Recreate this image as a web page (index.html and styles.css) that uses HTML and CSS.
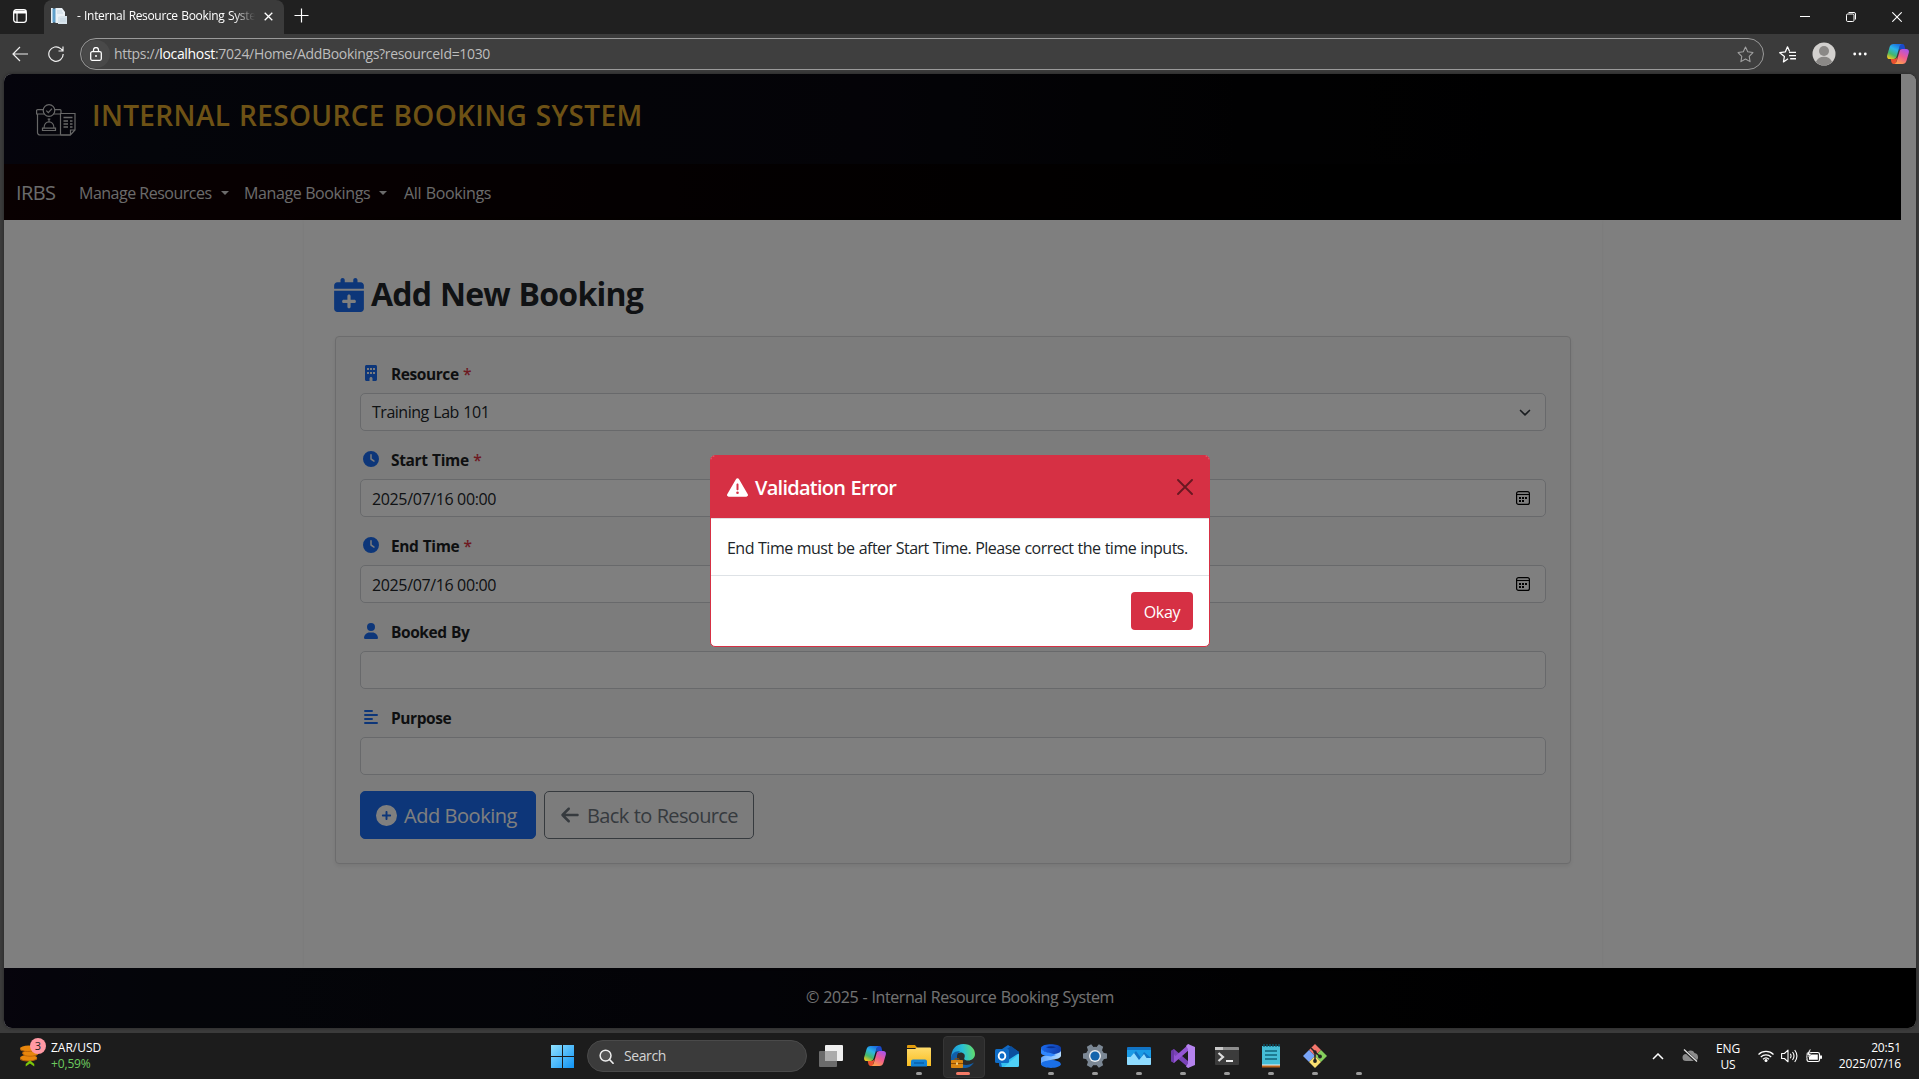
FILE: index.html
```html
<!DOCTYPE html>
<html lang="en">
<head>
<meta charset="utf-8">
<title>- Internal Resource Booking System</title>
<link rel="stylesheet" href="styles.css">
</head>
<body>
<svg width="0" height="0" class="defs" aria-hidden="true">
  <defs>
    <linearGradient id="cpA" x1="0.7" y1="0" x2="0.2" y2="1"><stop offset="0" stop-color="#1b6fe0"/><stop offset=".35" stop-color="#2bb4e8"/><stop offset=".7" stop-color="#45b86b"/><stop offset="1" stop-color="#f2c81e"/></linearGradient>
    <linearGradient id="cpB" x1="0.8" y1="0" x2="0.3" y2="1"><stop offset="0" stop-color="#a854ee"/><stop offset=".5" stop-color="#ee5a90"/><stop offset="1" stop-color="#ffa04d"/></linearGradient>
    <linearGradient id="win" x1="0" y1="0" x2="1" y2="1"><stop offset="0" stop-color="#8fe1ff"/><stop offset="1" stop-color="#0f93f5"/></linearGradient>
    <linearGradient id="edge" x1="0" y1="0.6" x2="1" y2="0.5"><stop offset="0" stop-color="#1b8fd8"/><stop offset=".5" stop-color="#28bfd6"/><stop offset="1" stop-color="#62dd6a"/></linearGradient>
    <linearGradient id="fold" x1="0" y1="0" x2="0" y2="1"><stop offset="0" stop-color="#ffdc6b"/><stop offset="1" stop-color="#f9bd22"/></linearGradient>
    <linearGradient id="blu" x1="0" y1="0" x2="1" y2="0.2"><stop offset="0" stop-color="#1a6bf0"/><stop offset="1" stop-color="#0f3fae"/></linearGradient>
    <linearGradient id="blv" x1="0" y1="0" x2="1" y2="0"><stop offset="0" stop-color="#5fa5ff"/><stop offset="1" stop-color="#b5dcff"/></linearGradient>
    <symbol id="copilot" viewBox="0 0 22 20">
      <path d="M13 0h2.500c1.200 0 1.700.8 2 1.800L18.300 5h-3.800c-1.800 0-2.600.8-3.100 2.400z" fill="#1a49c8"/>
      <path d="M6.500 0h8.300c-1.500.5-2 1.600-2.400 3L9.600 12.600c-.5 1.700-1.300 2.400-3 2.400H2.800C.6 15-.3 13.500.2 11.300L2.600 3C3.200 1 4.500 0 6.500 0z" fill="url(#cpA)"/>
      <path d="M9 20H6.500c-1.200 0-1.800-.8-2.100-1.900L3.700 15h3.700c1.800 0 2.700-.9 3.200-2.400z" fill="#e8502f"/>
      <path d="M15.500 20H7.400c1.500-.5 2-1.600 2.400-3l2.700-9.600C13 5.700 13.800 5 15.500 5h3.700c2.200 0 3.100 1.500 2.600 3.700L19.400 17c-.6 2-1.900 3-3.900 3z" fill="url(#cpB)"/>
    </symbol>
    <symbol id="clock" viewBox="0 0 512 512"><path fill="currentColor" d="M256 0a256 256 0 1 1 0 512A256 256 0 1 1 256 0zM232 120V256c0 8 4 15.500 10.700 20l96 64c11 7.400 25.900 4.400 33.300-6.700s4.400-25.900-6.700-33.300L280 243.200V120c0-13.300-10.700-24-24-24s-24 10.700-24 24z"/></symbol>
    <symbol id="picker" viewBox="0 0 14 14"><rect x=".6" y=".6" width="12.800" height="12.800" rx="2" fill="none" stroke="#000" stroke-width="1.200"/><path d="M1 3.500h12" stroke="#000" stroke-width="1.100"/><path d="M3 6h2v2H3zM6 6h2v2H6zM9 6h2v2H9zM3 9h2v2H3zM6 9h2v2H6z"/></symbol>
  </defs>
</svg>

<div class="browser">
  <div class="tabstrip">
    <svg class="ic-spaces" viewBox="0 0 14 14"><rect x=".7" y=".7" width="12.600" height="12.600" rx="2.500" fill="none" stroke="#fff" stroke-width="1.300"/><path d="M1 1.500h12v3H1z" fill="#fff"/><path d="M4 4v9" stroke="#fff" stroke-width="1.200"/></svg>
    <div class="tab">
      <svg class="favicon" viewBox="0 0 16 16"><path d="M0 0h2v15H0z" fill="#e8eef2"/><path d="M1.500 .5H5v14H1.500z" fill="#5f9fca"/><path d="M4.500 0H11l3 4v11H4.500z" fill="#eaf1f6"/><path d="M7 9l3-1h6v8H7z" fill="#d8e4ec"/><path d="M6 3h5M6 5h6M9 11h6M9 13h6" stroke="#c3d4e0"/></svg>
      <span class="tab-title">- Internal Resource Booking System</span>
      <svg class="tab-close" viewBox="0 0 9 9"><path d="M.7.700l7.600 7.600M8.300.7L.7 8.300" stroke="#fff" stroke-width="1.300"/></svg>
    </div>
    <svg class="tab-new" viewBox="0 0 15 15"><path d="M7.500.5v14M.5 7.500h14" stroke="#fff" stroke-width="1.200"/></svg>
    <div class="winctl">
      <svg viewBox="0 0 10 10"><path d="M0 4.500h10" stroke="#fff"/></svg>
      <svg viewBox="0 0 10 10"><rect x=".5" y="2" width="7.500" height="7.500" rx="1.200" fill="none" stroke="#fff"/><path d="M2.500.5H8A1.500 1.500 0 0 1 9.500 2v5.500" fill="none" stroke="#fff"/></svg>
      <svg viewBox="0 0 10 10"><path d="M.3.300l9.400 9.400M9.700.3L.3 9.700" stroke="#fff" stroke-width="1.100"/></svg>
    </div>
  </div>

  <div class="toolbar">
    <svg class="ic-back" viewBox="0 0 16 16"><path d="M8 1L1 8l7 7M1 8h15" fill="none" stroke="#eee" stroke-width="1.200"/></svg>
    <svg class="ic-reload" viewBox="0 0 16 16"><path d="M15.200 8A7.200 7.200 0 1 1 12.700 2.600L15 4.800M15 .5v4.500h-4.500" fill="none" stroke="#eee" stroke-width="1.200"/></svg>
    <div class="omnibox">
      <span class="lock"><svg viewBox="0 0 12 14"><rect x=".7" y="4.700" width="10.600" height="8.600" rx="1.500" fill="none" stroke="#fff" stroke-width="1.300"/><path d="M3.500 4.500V3a2.500 2.500 0 0 1 5 0v1.500" fill="none" stroke="#fff" stroke-width="1.300"/><circle cx="6" cy="9" r="1" fill="#fff"/></svg></span>
      <span class="url">https://<b>localhost</b>:7024/Home/AddBookings?resourceId=1030</span>
      <svg class="ic-star" viewBox="0 0 16 16"><path d="M8 1l2.100 4.500 4.900.7-3.500 3.500.8 5L8 12.300 3.700 14.700l.8-5L1 6.200l4.900-.7z" fill="none" stroke="#a2a2a2" stroke-linejoin="round"/></svg>
    </div>
    <svg class="ic-fav" viewBox="0 0 16 16"><path d="M8.500 12L4.200 15l.9-5.200L.7 6.300l5.200-.7L8 .8l2 4.300" fill="none" stroke="#fff" stroke-width="1.200" stroke-linejoin="round"/><path d="M9.500 6H16M9.500 9H16M10.500 12H16" stroke="#fff" stroke-width="1.200"/></svg>
    <svg class="ic-avatar" viewBox="0 0 24 24"><circle cx="12" cy="12" r="11.500" fill="#d2d0ce"/><circle cx="12" cy="9" r="5" fill="#8a8886"/><path d="M3.800 20a9 9 0 0 1 16.400 0 11.500 11.500 0 0 1-16.400 0z" fill="#8a8886"/></svg>
    <svg class="ic-more" viewBox="0 0 14 4"><circle cx="1.700" cy="2" r="1.400" fill="#fff"/><circle cx="7" cy="2" r="1.400" fill="#fff"/><circle cx="12.300" cy="2" r="1.400" fill="#fff"/></svg>
    <svg class="ic-copilot"><use href="#copilot"/></svg>
  </div>

  <div class="page">
    <header class="banner">
      <svg class="logo" viewBox="0 0 40 32" fill="none" stroke="#cfcfcf" stroke-width="1.200">
        <path d="M7.500 5.600H1.600a1 1 0 0 0-1 1V10h7.600M18.500 5.600H24a1 1 0 0 1 1 1V9.500M17.500 10H24M1.500 10v18.500a2.500 2.500 0 0 0 2.500 2.500H34.500"/>
        <circle cx="13" cy="6.500" r="5.800"/><path d="M10.300 6.600l2 2 3.700-4"/>
        <path d="M6.500 26.500h13v-2.300h-13zM8 24.200c0-8.500 10-8.500 10 0M13 17.800V15.500M11.700 15.200h2.600"/>
        <path d="M24.500 30.800V9.500H39V26l-4.500 5H24.500M39 26h-4.500v5"/>
        <path d="M27.500 13.500h9M27.500 17h4.500M34 17h2.500M27.500 20h4.500M34 20h2.500M27.500 23h4.500M34 23h2.500" stroke-width="1.400"/>
      </svg>
      <span class="site-title">INTERNAL RESOURCE BOOKING SYSTEM</span>
    </header>
    <nav class="navbar">
      <span class="brand">IRBS</span>
      <span class="nav-link res">Manage Resources<i class="caret"></i></span>
      <span class="nav-link book">Manage Bookings<i class="caret"></i></span>
      <span class="nav-link all">All Bookings</span>
    </nav>

    <main class="container">
      <h1>
        <svg viewBox="0 0 448 512"><path fill="currentColor" d="M96 32V64H48C21.500 64 0 85.500 0 112v48H448V112c0-26.500-21.500-48-48-48H352V32c0-17.700-14.300-32-32-32s-32 14.300-32 32V64H160V32c0-17.700-14.300-32-32-32S96 14.300 96 32zM448 192H0V464c0 26.500 21.500 48 48 48H400c26.500 0 48-21.500 48-48V192zM224 248c13.300 0 24 10.700 24 24v56h56c13.300 0 24 10.700 24 24s-10.700 24-24 24H248v56c0 13.300-10.700 24-24 24s-24-10.700-24-24V376H144c-13.300 0-24-10.700-24-24s10.700-24 24-24h56V272c0-13.300 10.700-24 24-24z"/></svg>
        <span>Add New Booking</span>
      </h1>
      <form class="card">
        <div class="label"><svg viewBox="0 0 384 512"><path fill="currentColor" fill-rule="evenodd" d="M48 0C21.500 0 0 21.500 0 48V464c0 26.500 21.500 48 48 48h96V432c0-26.500 21.500-48 48-48s48 21.500 48 48v80h96c26.500 0 48-21.500 48-48V48c0-26.500-21.500-48-48-48H48zM64 96h64v64H64zM160 96h64v64h-64zM256 96h64v64h-64zM64 224h64v64H64zM160 224h64v64h-64zM256 224h64v64h-64z"/></svg><span>Resource <em>*</em></span></div>
        <div class="field"><span>Training Lab 101</span><svg class="chev" viewBox="0 0 16 16"><path d="M2.500 5.500l5.500 5.500 5.500-5.500" fill="none" stroke="#343a40" stroke-width="2" stroke-linecap="round" stroke-linejoin="round"/></svg></div>
        <div class="label"><svg><use href="#clock"/></svg><span class="start-label">Start Time <em>*</em></span></div>
        <div class="field"><span class="date">2025/07/16 00:00</span><svg class="cal"><use href="#picker"/></svg></div>
        <div class="label"><svg><use href="#clock"/></svg><span>End Time <em>*</em></span></div>
        <div class="field"><span class="date">2025/07/16 00:00</span><svg class="cal"><use href="#picker"/></svg></div>
        <div class="label"><svg viewBox="0 0 448 512"><path fill="currentColor" d="M224 256A128 128 0 1 0 224 0a128 128 0 1 0 0 256zm-45.700 48C79.800 304 0 383.800 0 482.300C0 498.700 13.300 512 29.700 512H418.300c16.400 0 29.700-13.300 29.700-29.700C448 383.800 368.200 304 269.700 304H178.300z"/></svg><span>Booked By</span></div>
        <div class="field"></div>
        <div class="label"><svg viewBox="0 0 448 512"><path d="M32 64h224M32 192h384M32 320h224M32 448h384" stroke="currentColor" stroke-width="62" stroke-linecap="round"/></svg><span>Purpose</span></div>
        <div class="field"></div>
        <div class="actions">
          <span class="btn add"><svg viewBox="0 0 512 512"><path fill="currentColor" d="M256 512A256 256 0 1 0 256 0a256 256 0 1 0 0 512zM232 344V280H168c-13.300 0-24-10.700-24-24s10.700-24 24-24h64V168c0-13.300 10.700-24 24-24s24 10.700 24 24v64h64c13.300 0 24 10.700 24 24s-10.700 24-24 24H280v64c0 13.300-10.700 24-24 24s-24-10.700-24-24z"/></svg><span>Add Booking</span></span>
          <span class="btn back"><svg viewBox="0 0 448 512"><path fill="currentColor" d="M9.400 233.400c-12.500 12.500-12.500 32.800 0 45.300l160 160c12.500 12.500 32.800 12.500 45.300 0s12.500-32.800 0-45.300L109.200 288H416c17.700 0 32-14.300 32-32s-14.300-32-32-32H109.300L214.600 118.600c12.500-12.500 12.500-32.800 0-45.300s-32.800-12.500-45.300 0l-160 160z"/></svg><span>Back to Resource</span></span>
        </div>
      </form>
    </main>
    <footer class="footer"><span>© 2025 - Internal Resource Booking System</span></footer>

    <div class="backdrop"></div>
    <div class="modal">
      <div class="modal-head">
        <svg class="warn" viewBox="0 0 512 512"><path fill="#fff" d="M256 32c14.200 0 27.300 7.500 34.500 19.800l216 368c7.300 12.400 7.300 27.700.2 40.100S486.300 480 472 480H40c-14.300 0-27.600-7.700-34.700-20.100s-7-27.800.2-40.100l216-368C228.700 39.500 241.800 32 256 32zm0 128c-13.300 0-24 10.700-24 24V296c0 13.300 10.700 24 24 24s24-10.700 24-24V184c0-13.300-10.700-24-24-24zm32 224a32 32 0 1 0-64 0 32 32 0 1 0 64 0z"/></svg>
        <span class="modal-title">Validation Error</span>
        <svg class="x" viewBox="0 0 16 16"><path d="M1 1l14 14M15 1L1 15" stroke="#000" stroke-width="1.900" stroke-linecap="round"/></svg>
      </div>
      <div class="modal-body"><span>End Time must be after Start Time. Please correct the time inputs.</span></div>
      <div class="modal-foot"><span class="okay">Okay</span></div>
    </div>
  </div>
</div>

<div class="taskbar">
  <div class="widget">
    <div class="coins">
      <svg viewBox="0 0 20 24"><g fill="#e8860c"><ellipse cx="9" cy="4" rx="9" ry="3"/><ellipse cx="11" cy="9" rx="8.500" ry="3"/><ellipse cx="9" cy="14" rx="9" ry="3.200"/></g><path d="M0 3v2c2 3 14 3 18 0M3 8v2c2 3 13 3 16 0M0 13v2c2 3 14 3 18 0" fill="none" stroke="#b9630a" stroke-width="1"/><path d="M6 23v-2.500l4.500-4 4.500 4V23l-4.500-3z" fill="#7cc70a"/></svg>
      <span class="badge">3</span>
    </div>
    <div class="rates"><span>ZAR/USD</span><span class="up">+0,59%</span></div>
  </div>
  <div class="apps">
    <svg class="start" viewBox="0 0 23 23"><path d="M0 0h11v11H0zM12 0h11v11H12zM0 12h11v11H0zM12 12h11v11H12z" fill="url(#win)"/></svg>
    <div class="search"><svg viewBox="0 0 16 16"><circle cx="7" cy="7" r="5.800" fill="#555" stroke="#eee" stroke-width="1.600"/><path d="M11.200 11.200l3.800 4" stroke="#eee" stroke-width="1.800" stroke-linecap="round"/></svg><span>Search</span></div>
    <div class="app"><svg viewBox="0 0 24 24"><rect x="6" y="1" width="18" height="16" rx="1" fill="#efefef"/><rect x="0" y="7" width="18" height="16" rx="1" fill="#6b6b6b"/><path d="M6 7h12v10H6z" fill="#ababab"/></svg></div>
    <div class="app"><svg class="cp"><use href="#copilot"/></svg></div>
    <div class="app run"><svg viewBox="0 0 24 24"><path d="M0 2a1 1 0 0 1 1-1h7l2.500 3H0z" fill="#e09b0c"/><path d="M0 5h8l2-1.500h13a1 1 0 0 1 1 1V22H0z" fill="url(#fold)"/><path d="M4 22.500v-5a2 2 0 0 1 2-2h12a2 2 0 0 1 2 2v5z" fill="#1382d4"/><path d="M7 19h10" stroke="#0a5ea8" stroke-width="1.500"/></svg></div>
    <div class="app run active"><svg viewBox="0 0 24 24"><path d="M0 15C0 5 5 0 12.500 0 20 0 24 5 24 10c0 4-3 6.500-7 6.500-3 0-4.500-1-3.500-3 1-2.500-.5-5-4-5-4 0-7 3-6.500 8z" fill="url(#edge)"/><path d="M0 15c0-5 4-8.500 9-7.500-3 1.500-4 5.500-2 9 3 5 10 6 16 2-3 5-8 6-11.500 5.500C4 23.500 0 20 0 15z" fill="#125ea8"/><rect x="0" y="16" width="12" height="8" rx=".8" fill="#d98511"/><path d="M0 19h12v1H0z" fill="#8e4e05"/><path d="M5.200 18.500h1.600v2.300H5.200z" fill="#ffe9a0"/><path d="M4 16v-1.200h4V16" fill="none" stroke="#8e4e05"/></svg></div>
    <div class="app"><svg viewBox="0 0 24 24"><path d="M4 7l9-6 11 7v13a2 2 0 0 1-2 2H6a2 2 0 0 1-2-2z" fill="#1168c4"/><path d="M4 10h20v11a2 2 0 0 1-2 2H7z" fill="#32c1f2"/><path d="M24 9L10 18h-2V8l8-6 8 6z" fill="#0b4f9e"/><path d="M24 10L9 23h13a2 2 0 0 0 2-2z" fill="#4fd0f7"/><rect x="0" y="5" width="14" height="14" rx="1.500" fill="#0f6cc6"/><ellipse cx="7" cy="12" rx="3.300" ry="3.700" fill="none" stroke="#fff" stroke-width="1.900"/></svg></div>
    <div class="app run"><svg viewBox="0 0 24 24"><path d="M2 13.500C3 17 22 14 22 20.500 20 25 4 25 2 20.500z" fill="#1a6fe8"/><path d="M2 3.500C4-1 20-1 22 3.500v5C20 12 2 9 2 3.500z" fill="url(#blu)"/><path d="M22 6.500v5.500C21 17 2 15 2 20.500V14.500C3 9 21 12 22 6.500z" fill="url(#blv)"/><path d="M2 3.500C3 9 12 8 17 11l-5 1.500C8 12 2 11.500 2 9z" fill="#2f86ff"/><path d="M7 3.200q5-2 10 0-5 2-10 0z" fill="#0a2f8c"/></svg></div>
    <div class="app run"><svg viewBox="0 0 24 24"><g fill="#7b8794"><circle cx="12" cy="12" r="9.200"/><path d="M9.500 0h5l1 5h-7zM9.500 24h5l1-5h-7z" transform="rotate(30 12 12)"/><path d="M9.500 0h5l1 5h-7zM9.500 24h5l1-5h-7z" transform="rotate(90 12 12)"/><path d="M9.500 0h5l1 5h-7zM9.500 24h5l1-5h-7z" transform="rotate(150 12 12)"/></g><circle cx="12" cy="12" r="6" fill="#e9edf1"/><circle cx="12" cy="12" r="4.600" fill="#1464ac"/></svg></div>
    <div class="app run"><svg viewBox="0 0 24 24"><rect y="3" width="24" height="18" rx="1" fill="#1173c4"/><path d="M0 6h24v8L17 8l-3 6-5-7-5 6H0z" fill="#1a9be6"/><path d="M0 13h3.500L7 9l5 7 5-6 2.500 4H24v6a1 1 0 0 1-1 1H1a1 1 0 0 1-1-1z" fill="#8fdcff"/></svg></div>
    <div class="app run"><svg viewBox="0 0 24 24"><path d="M0 7l3-2 15 13v6L0 9z" fill="#7a43b8"/><path d="M0 7v10l3 2L18 6V0L4.500 12z" fill="#9455d4"/><path d="M0 7l3-2v14l-3-2z" fill="#6b3aa6"/><path d="M17 0l7 3v18l-7 3-2-1.500 2-3V5l-2-3z" fill="#b583ee"/></svg></div>
    <div class="app run"><svg viewBox="0 0 24 24"><rect y="3" width="24" height="18" rx="1" fill="#3c3c3c"/><path d="M0 4a1 1 0 0 1 1-1h22a1 1 0 0 1 1 1v2H0z" fill="#8c8c8c"/><path d="M0 3h8v3H0z" fill="#c8c8c8"/><path d="M3.500 9l4.500 4-4.500 4" fill="none" stroke="#ddd" stroke-width="2.200"/><path d="M11 17h7" stroke="#fff" stroke-width="1.800"/></svg></div>
    <div class="app run"><svg viewBox="0 0 24 24"><path d="M3 2h18v19H3z" fill="#45bdd6"/><path d="M3 21h18v2.500H3z" fill="#b8631b"/><path d="M3 20.500h18v1H3z" fill="#f1f1f1"/><path d="M5 0v3M8 0v3M11 0v3M14 0v3M17 0v3M20 0v3" stroke="#0d5c73" stroke-width="1.300"/><path d="M6 7h12M6 11h12M6 15h12" stroke="#12647b" stroke-width="1.600"/></svg></div>
    <div class="app run"><svg viewBox="0 0 24 24"><path d="M12 0l6 6-6 6-6-6z" fill="#f4766c"/><path d="M6 6l6 6-6 6-6-6z" fill="#79a5f8"/><path d="M18 6l6 6-6 6-6-6z" fill="#84cf5c"/><path d="M12 12l6 6-6 6-6-6z" fill="#fbe071"/><path d="M8 4l4 4v9M12 8l5 4.500" fill="none" stroke="#222" stroke-width="1.500"/><circle cx="12" cy="8" r="1.700" fill="#222"/><circle cx="12" cy="17" r="1.900" fill="#222"/><circle cx="17" cy="12.500" r="1.900" fill="#222"/></svg></div>
    <div class="app run"></div>
  </div>
  <div class="tray">
    <svg class="t-up" viewBox="0 0 12 7"><path d="M1 6l5-5 5 5" fill="none" stroke="#fff" stroke-width="1.500"/></svg>
    <svg class="t-cloud" viewBox="0 0 17 14"><path d="M4 12a3.500 3.500 0 0 1 0-7c1-4 7-5 8.500-1 4 0 5 7 1 8z" fill="#8b8b8b"/><path d="M2 1l13 12" stroke="#1d1d1d" stroke-width="3"/><path d="M2 .5l13 12" stroke="#e5e5e5" stroke-width="1.200"/></svg>
    <div class="lang"><span>ENG</span><span>US</span></div>
    <svg class="t-wifi" viewBox="0 0 16 12"><path d="M.5 4.500a10.600 10.600 0 0 1 15 0M2.800 7a7.500 7.500 0 0 1 10.400 0M5 9.200a4.500 4.500 0 0 1 6 0" fill="none" stroke="#fff" stroke-width="1.200"/><circle cx="8" cy="10.500" r="1.500" fill="#fff"/></svg>
    <svg class="t-vol" viewBox="0 0 17 14"><path d="M.6 4.500h2.800L7 1.200v11.600L3.400 9.500H.6z" fill="none" stroke="#fff" stroke-width="1.100" stroke-linejoin="round"/><path d="M9.300 4.800q1.500 2.200 0 4.400M11.500 3q3 4 0 8M13.700 1q4.500 6 0 12" fill="none" stroke="#fff" stroke-width="1.100"/></svg>
    <svg class="t-bat" viewBox="0 0 16 14"><rect x="1" y="3.500" width="12.500" height="9" rx="1.800" fill="none" stroke="#fff" stroke-width="1.200"/><path d="M3 5.500h8.800v5.200H3zM14 6.500h2v3.200h-2z" fill="#fff"/><path d="M4 0L0 6h2.500L1 9.500 6 4.500H3.500L5 0z" fill="#fff" stroke="#1d1d1d" stroke-width=".5"/></svg>
    <div class="time"><span class="hm">20:51</span><span class="ymd">2025/07/16</span></div>
  </div>
</div>
</body>
</html>
```
FILE: styles.css
```css
* { box-sizing: border-box; }
body {
  margin: 0;
  width: 1919px;
  height: 1079px;
  overflow: hidden;
  display: flex;
  flex-direction: column;
  background: #3b3b3b;
  font-family: "Open Sans", "Noto Sans", sans-serif;
  color: #212529;
  white-space: nowrap;
}
svg { display: block; flex: none; }
.defs { position: absolute; }

/* browser chrome */
.browser { height: 1033px; display: flex; flex-direction: column; flex: none; }
.tabstrip { height: 34px; background: #202020; display: flex; align-items: center; padding-left: 13px; padding-right: 17px; flex: none; }
.ic-spaces { width: 14px; height: 14px; margin-right: 17px; margin-top: -2px; }
.tab { width: 240px; height: 34px; background: #3b3b3b; border-radius: 8px 8px 0 0; display: flex; align-items: center; padding: 0 11px 2px 7px; }
.favicon { width: 16px; height: 16px; margin-right: 10px; }
.tab-title { width: 178px; overflow: hidden; font-size: 12px; line-height: 18px; letter-spacing: -.34px; word-spacing: .8px; color: #fff; -webkit-mask-image: linear-gradient(90deg, #000 88%, transparent); mask-image: linear-gradient(90deg, #000 88%, transparent); }
.tab-close { width: 9px; height: 9px; margin-left: 9px; }
.tab-new { width: 15px; height: 15px; margin-left: 10px; margin-top: -3px; }
.winctl { margin-left: auto; display: flex; gap: 36px; }
.winctl svg { width: 10px; height: 10px; }

.toolbar { height: 40px; display: flex; align-items: center; padding-left: 12px; padding-right: 10px; flex: none; }
.ic-back { width: 16px; height: 16px; margin-right: 20px; }
.ic-reload { width: 16px; height: 16px; margin-right: 16px; }
.omnibox { width: 1684px; height: 32px; border: 1px solid #9a9a9a; border-radius: 16px; background: #3f3f3f; display: flex; align-items: center; padding: 0 9px 0 1px; }
.lock { width: 28px; height: 28px; border-radius: 50%; background: #494949; display: flex; align-items: center; justify-content: center; margin-right: 4px; }
.lock svg { width: 12px; height: 14px; }
.url { font-size: 14px; letter-spacing: -.32px; color: #bdbdbd; margin-top: -1px; }
.url b { font-weight: 400; color: #fff; }
.ic-star { width: 17px; height: 17px; margin-left: auto; }
.ic-fav { width: 17px; height: 17px; margin-left: 15px; }
.ic-avatar { width: 24px; height: 24px; margin-left: 16px; }
.ic-more { width: 14px; height: 4px; margin-left: 17px; }
.ic-copilot { width: 22px; height: 20px; margin-left: 20px; }

/* site */
.page { position: relative; width: 1912px; height: 954px; margin-left: 4px; border-radius: 8px; overflow: hidden; background: #fff; box-shadow: 0 0 3px #222; display: flex; flex-direction: column; }
.banner { height: 90px; width: 1897px; display: flex; align-items: center; padding-left: 32px; background: linear-gradient(90deg, #0b0918 0, #080a14 8%, #08070f 45%, #030305 65%, #000 85%); flex: none; }
.logo { width: 40px; height: 32px; margin-right: 16px; margin-top: 1px; }
.site-title { font-size: 28px; font-weight: 600; letter-spacing: .36px; word-spacing: 1px; color: #dca52a; margin-top: -8px; }
.navbar { height: 56px; width: 1897px; display: flex; align-items: center; padding: 1px 0 0 12px; background: linear-gradient(90deg, #120002, #080002 35%, #000 75%); color: #d6d6d6; font-size: 16px; flex: none; }
.brand { width: 63px; font-size: 20px; letter-spacing: -.6px; }
.nav-link { display: flex; align-items: center; letter-spacing: -.5px; }
.nav-link.res { width: 165px; }
.nav-link.book { width: 160px; letter-spacing: -.38px; }
.nav-link.all { letter-spacing: -.34px; word-spacing: .7px; }
.caret { border: 4.5px solid transparent; border-top-color: #d6d6d6; border-bottom: 0; margin-left: 9px; }
.container { width: 1298px; height: 748px; margin: 0 auto; position: relative; left: -7px; padding: 55px 30px 0; box-shadow: 0 0 4px rgba(0, 0, 0, .06); }
h1 { margin: 0 0 23px; height: 38px; font-size: 32px; line-height: 38px; font-weight: 700; letter-spacing: -.75px; word-spacing: 1px; display: flex; align-items: center; gap: 7px; }
h1 svg { width: 30px; height: 34px; color: #1b6df2; margin-top: 1px; }
.card { margin: 0 0 0 1px; width: 1236px; height: 528px; border: 1px solid #d9d9da; border-radius: 4px; background: #f8f8f9; padding: 24px; box-shadow: 0 2px 4px rgba(0, 0, 0, .08); }
.label { height: 24px; margin-bottom: 8px; padding-left: 1px; display: flex; align-items: center; gap: 10px; font-weight: 700; font-size: 15.500px; letter-spacing: -.43px; word-spacing: .8px; color: #1c1f23; }
.label svg { width: 20px; height: 16px; color: #1b6df2; }
.label span { padding-top: 1px; }
.start-label { letter-spacing: -.36px; }
.label em { font-style: normal; font-weight: 600; color: #dc3545; }
.field { height: 38px; margin-bottom: 16px; padding: 0 12px 0 11px; border: 1px solid #d0d3d7; border-radius: 5px; background: #fff; display: flex; align-items: center; justify-content: space-between; font-size: 16px; letter-spacing: -.48px; word-spacing: .8px; }
.field .date { letter-spacing: -.36px; word-spacing: 0; padding-top: 1px; }
.chev { width: 16px; height: 13px; }
.cal { width: 14px; height: 14px; margin-right: 3px; }
.actions { display: flex; gap: 8px; }
.btn { height: 48px; border: 1px solid #1b6df2; border-radius: 5px; display: flex; align-items: center; font-size: 20px; letter-spacing: -.45px; padding: 0 15px; }
.add { width: 176px; background: #1b6df2; color: #fff; gap: 7px; }
.add svg { width: 21px; height: 21px; }
.back { width: 210px; border-color: #6c757d; color: #6c757d; gap: 8px; padding-left: 16px; letter-spacing: -.65px; word-spacing: .6px; }
.back svg { width: 18px; height: 20px; }
.footer { height: 60px; display: flex; align-items: center; justify-content: center; padding: 0 0 3px; background: linear-gradient(90deg, #0c0818 0, #080b13 8%, #07060e 40%, #030305 65%, #000 85%); color: #e4e4e4; font-size: 16px; letter-spacing: -.43px; word-spacing: .6px; flex: none; }

/* validation dialog */
.backdrop { position: absolute; inset: 0; background: rgba(0, 0, 0, .5); }
.modal { position: absolute; left: 706px; top: 381px; width: 500px; height: 192px; border: 1px solid #d63044; border-radius: 5px; background: #fff; overflow: hidden; }
.modal-head { height: 63px; background: #d63044; border-bottom: 1px solid #e3dfe3; display: flex; align-items: center; padding: 0 16px; color: #fff; }
.warn { width: 21px; height: 21px; margin-right: 7px; }
.modal-title { font-size: 20px; font-weight: 600; letter-spacing: -.75px; word-spacing: 1px; padding-top: 1px; }
.x { width: 16px; height: 16px; margin-left: auto; opacity: .5; }
.modal-body { height: 56px; padding: 1px 16px 0; display: flex; align-items: center; font-size: 16px; letter-spacing: -.52px; word-spacing: .5px; }
.modal-foot { border-top: 1px solid #dee2e6; padding: 16px; display: flex; justify-content: flex-end; }
.okay { width: 62px; height: 38px; border-radius: 4px; background: #d63044; color: #fff; display: flex; align-items: center; justify-content: center; font-size: 16px; letter-spacing: -.3px; padding-top: 1px; }

/* taskbar */
.taskbar { height: 46px; background: #1c1c1c; display: flex; align-items: center; color: #fff; font-size: 12px; position: relative; flex: none; }
.widget { width: 551px; display: flex; padding-left: 20px; align-items: center; }
.coins { position: relative; width: 31px; height: 24px; }
.coins svg { width: 19px; height: 24px; }
.badge { position: absolute; left: 10px; top: -6px; width: 16px; height: 16px; border-radius: 50%; background: #ff99a4; color: #222; font-size: 11px; line-height: 16px; text-align: center; }
.rates { display: flex; flex-direction: column; line-height: 16px; letter-spacing: -.02px; }
.up { color: #6ccb5f; letter-spacing: -.15px; }
.apps { display: flex; align-items: center; height: 46px; }
.start { width: 23px; height: 23px; margin-right: 13px; }
.search { width: 220px; height: 32px; border-radius: 16px; background: #3b3b3b; border: 1px solid #4a4a4a; display: flex; align-items: center; padding-left: 11px; margin-right: 2px; font-size: 14px; letter-spacing: -.4px; color: #d4d4d4; }
.search span { margin-top: -1px; }
.search svg { width: 15px; height: 15px; margin-right: 10px; }
.app { width: 44px; height: 46px; display: flex; align-items: center; justify-content: center; position: relative; }
.app svg { width: 24px; height: 24px; }
.app .cp { width: 22px; height: 20px; }
.run::after { content: ""; position: absolute; left: 19px; top: 39px; width: 6px; height: 3px; border-radius: 2px; background: #9a9a9a; }
.active::before { content: ""; position: absolute; left: 2px; top: 3px; width: 40px; height: 40px; border-radius: 4px; border: 1px solid #363636; background: #2b2b2b; }
.active svg { position: relative; }
.active::after { left: 15px; width: 14px; background: #f47b67; }
.tray { margin-left: auto; padding-right: 18px; display: flex; align-items: center; line-height: 16px; }
.t-up { width: 12px; height: 7px; margin-right: 18px; }
.t-cloud { width: 17px; height: 14px; margin-right: 17px; }
.lang { width: 24px; display: flex; flex-direction: column; align-items: center; margin-right: 18px; padding-top: 1px; }
.t-wifi { width: 16px; height: 12px; margin-right: 7px; }
.t-vol { width: 17px; height: 14px; margin-right: 8px; }
.t-bat { width: 16px; height: 14px; }
.time { width: 79px; display: flex; flex-direction: column; align-items: flex-end; }
.time, .lang { letter-spacing: -.15px; }
```
